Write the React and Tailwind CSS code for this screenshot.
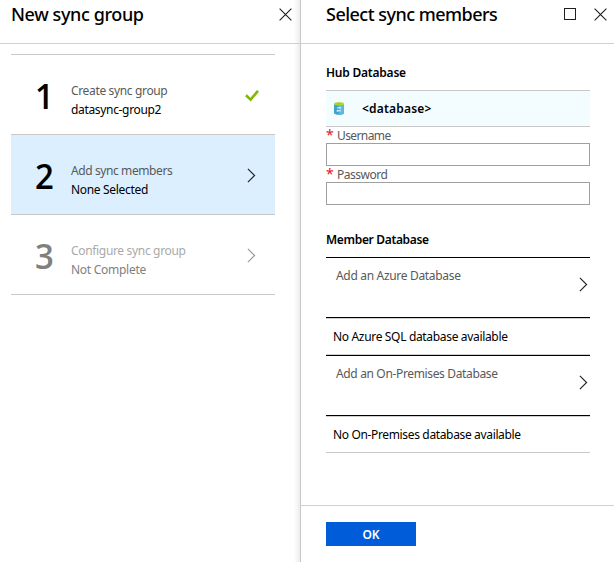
import React from "react";

function Close() {
  return (
    <svg width="13" height="13" viewBox="0 0 13 13" fill="none" stroke="#1f1f1f" strokeWidth="1.1">
      <path d="M.6.6l11.8 11.8M12.4.6L.6 12.4" />
    </svg>
  );
}

function Chevron({ color = "#222" }) {
  return (
    <svg width="9" height="15" viewBox="0 0 9 15" fill="none" stroke={color} strokeWidth="1.15">
      <path d="M.9.8l6.7 6.7L.9 14.2" />
    </svg>
  );
}

function Check() {
  return (
    <svg width="14" height="12" viewBox="0 0 14 12" fill="none" stroke="#7fba00" strokeWidth="2.6">
      <path d="M1 5.3l4.6 4.4L13 .8" />
    </svg>
  );
}

function Database() {
  return (
    <svg width="10" height="13" viewBox="0 0 10 13">
      <path d="M0 2v9c0 1 2.2 1.8 5 1.8s5-.8 5-1.8V2z" fill="#3fa3d1" />
      <path d="M5 2v10.8c2.8 0 5-.8 5-1.8V2z" fill="#5cb6dd" />
      <ellipse cx="5" cy="1.8" rx="5" ry="1.7" fill="#b5db3c" />
      <ellipse cx="5" cy="1.8" rx="3.3" ry=".9" fill="#9fcf1a" />
      <path d="M3 5.8h4.2M6 4.8v2M2.6 8.8h4.6M3.8 7.8v2" stroke="#e4f4fb" strokeWidth="1" />
    </svg>
  );
}

function Step({ number, title, status, active, disabled, done, titleClass, statusClass }) {
  return (
    <div className={`flex h-20 border-b border-[#c8c8c8] ${active ? "bg-[#dbefff]" : ""}`}>
      <div className={`w-[60px] pl-[24px] pt-[17px] font-['Open_Sans',sans-serif] text-[35px] leading-[48px] font-semibold ${disabled ? "text-[#808080]" : "text-black"}`}>
        <span className="inline-block origin-left scale-x-[0.94]">{number}</span>
      </div>
      <div className="flex-1 pt-[26px] leading-[19px] whitespace-nowrap">
        <div className={`${titleClass} ${disabled ? "text-[#a9a9a9]" : "text-[#595959]"}`}>{title}</div>
        <div className={`${statusClass} ${disabled ? "text-[#808080]" : "text-black"}`}>{status}</div>
      </div>
      <div className={done ? "w-[30px] pt-[35px]" : "w-[28px] pt-[33px]"}>
        {done ? <Check /> : <Chevron color={disabled ? "#999" : "#222"} />}
      </div>
    </div>
  );
}

function Field({ label, className }) {
  return (
    <label className="block">
      <span className="flex h-4 text-[#595959]">
        <span className="w-[11px] text-[14px] leading-[15px] text-[#e81123]">*</span>
        <span className={`leading-[18px] ${className}`}>{label}</span>
      </span>
      <input className="block h-[23px] w-full border border-[#a0a0a0] bg-white outline-none" />
    </label>
  );
}

function AddRow({ label, className }) {
  return (
    <div className="flex h-[61px] justify-between border-y border-black pl-[10px] pr-[2px] shadow-[0_1px_0_#d0d0d0]">
      <span className={`pt-[9px] leading-[18px] text-[#595959] ${className}`}>{label}</span>
      <span className="pt-[19px]"><Chevron /></span>
    </div>
  );
}

export default function App() {
  return (
    <div className="flex h-[562px] w-[614px] overflow-hidden bg-white font-['Noto_Sans',sans-serif] text-[12px] text-black">
      <section className="flex w-[300px] flex-col bg-[linear-gradient(to_right,transparent_294px,#ececec_300px)]">
        <header className="flex h-11 justify-between border-b border-[#d0d0d0] pl-[11px] pr-[8px]">
          <h1 className="pt-[1px] text-[18px] leading-[26px] font-medium tracking-[-0.39px]">New sync group</h1>
          <span className="pt-[8px]"><Close /></span>
        </header>
        <div className="mt-[10px] ml-[11px] w-[264px] border-t border-[#c8c8c8]">
          <Step number="1" title="Create sync group" status="datasync-group2" done titleClass="tracking-[-0.35px]" statusClass="tracking-[-0.33px]" />
          <Step number="2" title="Add sync members" status="None Selected" active titleClass="tracking-[-0.4px]" statusClass="tracking-[-0.32px]" />
          <Step number="3" title="Configure sync group" status="Not Complete" disabled titleClass="tracking-[-0.33px]" statusClass="tracking-[-0.27px]" />
        </div>
      </section>
      <section className="flex w-[314px] flex-col border-l border-[#c8c8c8]">
        <header className="flex h-11 border-b border-[#d0d0d0] pl-[25px] pr-[7px]">
          <h1 className="flex-1 pt-[1px] text-[18px] leading-[26px] font-medium tracking-[-0.52px]">Select sync members</h1>
          <span className="mt-[8px] mr-[18px] size-[12px] border border-[#1f1f1f]" />
          <span className="pt-[8px]"><Close /></span>
        </header>
        <div className="ml-[25px] w-[264px] flex-1 whitespace-nowrap">
          <h2 className="h-[46px] pt-[20px] leading-[18px] font-semibold tracking-[-0.22px]">Hub Database</h2>
          <div className="flex h-[37px] items-center border-y border-[#c8c8c8] bg-[#f3fcff] pl-[8px]">
            <Database />
            <span className="ml-[18px] font-semibold tracking-[0.2px]">&lt;database&gt;</span>
          </div>
          <Field label="Username" className="tracking-[-0.6px]" />
          <Field label="Password" className="tracking-[-0.5px]" />
          <h2 className="h-[52px] pt-[26px] leading-[18px] font-semibold tracking-[-0.33px]">Member Database</h2>
          <AddRow label="Add an Azure Database" className="tracking-[-0.32px]" />
          <div className="h-[37px] border-b border-[#d0d0d0] pl-[7px] pt-[10px] leading-[18px] tracking-[-0.33px]">No Azure SQL database available</div>
          <AddRow label="Add an On-Premises Database" className="tracking-[-0.35px]" />
          <div className="h-[37px] border-b border-[#c8c8c8] pl-[7px] pt-[10px] leading-[18px] tracking-[-0.35px]">No On-Premises database available</div>
        </div>
        <footer className="h-[57px] border-t border-[#d0d0d0] pt-[16px] pl-[25px]">
          <button className="block h-[24px] w-[90px] bg-[#015cda] text-[12px] leading-[25px] font-semibold text-white">OK</button>
        </footer>
      </section>
    </div>
  );
}
